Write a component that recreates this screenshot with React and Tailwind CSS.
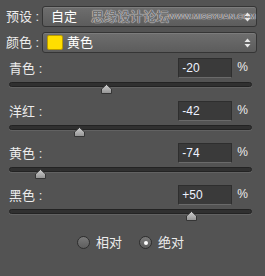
const font = { fontFamily: '"Liberation Sans", "Noto Sans CJK SC", sans-serif' };

const sliders = [
  { label: '青色', value: -20, mt: 'mt-[5px]' },
  { label: '洋红', value: -42, mt: 'mt-[14px]' },
  { label: '黄色', value: -74, mt: 'mt-[13px]' },
  { label: '黑色', value: 50, mt: 'mt-[13px]' },
];

function Arrows() {
  return (
    <svg width="7" height="10" viewBox="0 0 7 10" className="absolute right-[5px] top-1/2 -translate-y-1/2">
      <path d="M3.5 0.5 L6.5 4 L0.5 4 Z" fill="#e8e8e8" />
      <path d="M3.5 9.5 L6.5 6 L0.5 6 Z" fill="#e8e8e8" />
    </svg>
  );
}

function Dropdown({ children }) {
  return (
    <div className="relative ml-auto mr-[8px] h-[21px] w-[215px] shrink-0 rounded-[3px] border border-[#353535] bg-gradient-to-b from-[#6e6e6e] to-[#5c5c5c] shadow-[inset_0_1px_0_#7c7c7c] flex items-center">
      {children}
      <Arrows />
    </div>
  );
}

function Thumb({ value }) {
  const left = 121.5 + value * 1.215 - 5.5;
  return (
    <svg
      width="11"
      height="10"
      viewBox="0 0 11 10"
      className="absolute top-[2px]"
      style={{ left: `${left}px` }}
    >
      <defs>
        <linearGradient id="tg" x1="0" y1="0" x2="0" y2="1">
          <stop offset="0" stopColor="#d0d0d0" />
          <stop offset="1" stopColor="#929292" />
        </linearGradient>
      </defs>
      <path d="M5.5 0.5 L10.5 5 L10.5 9.5 L0.5 9.5 L0.5 5 Z" fill="url(#tg)" stroke="#353535" strokeWidth="1" />
    </svg>
  );
}

function Slider({ label, value, mt }) {
  const text = value > 0 ? `+${value}` : `${value}`;
  return (
    <div className={`${mt} pl-[9px]`}>
      <div className="flex h-[20px] items-center">
        <span className="whitespace-nowrap text-[13px] text-[#ececec] leading-none">
          {label} :
        </span>
        <div className="ml-auto h-[20px] w-[54px] border border-[#2e2e2e] border-b-[#6a6a6a] bg-[#3a3a3a] pl-[3px] flex items-center text-[12px] text-[#eef2ff]">
          {text}
        </div>
        <span className="ml-[5px] mr-[17px] self-start mt-[3px] text-[12px] text-[#ececec] leading-none">%</span>
      </div>
      <div className="relative mt-[4px] h-[5px] w-[243px]">
        <div className="h-[5px] w-[243px] rounded-full border border-[#232323] bg-[#303030] shadow-[0_1px_0_#626262]" />
        <Thumb value={value} />
      </div>
    </div>
  );
}

function Radio({ checked, label }) {
  return (
    <div className="flex items-center">
      <div className="h-[13px] w-[13px] rounded-full border border-[#2e2e2e] bg-gradient-to-b from-[#7a7a7a] to-[#5e5e5e] flex items-center justify-center">
        {checked && <div className="h-[4px] w-[4px] rounded-full bg-white" />}
      </div>
      <span className="ml-[6px] text-[13px] text-[#ececec] leading-none">{label}</span>
    </div>
  );
}

export default function App() {
  return (
    <div className="h-[276px] w-[265px] bg-[#535353] overflow-hidden" style={font}>
      <div className="flex items-center pt-[6px] pl-[6px]">
        <span className="whitespace-nowrap text-[13px] text-[#ececec] leading-none">预设 :</span>
        <Dropdown>
          <span className="ml-[8px] text-[13px] text-white leading-none">自定</span>
          <span className="absolute left-[48px] top-[3px] text-[13px] font-bold leading-none text-[#727272] [text-shadow:0_0_1px_#e0e0e0,0_0_1px_#e0e0e0]">
            思缘设计论坛
          </span>
          <span className="absolute left-[125px] top-[6px] text-[8px] font-bold leading-none text-[#6a6a6a] [text-shadow:0_0_1px_#f0f0f0,0_0_1px_#f0f0f0]">
            WWW.MISSYUAN.COM
          </span>
        </Dropdown>
      </div>
      <div className="mt-[5px] flex items-center pl-[6px]">
        <span className="whitespace-nowrap text-[13px] text-[#ececec] leading-none">颜色 :</span>
        <Dropdown>
          <div className="ml-[4px] h-[15px] w-[16px] rounded-[2px] border border-[#b89a00] bg-[#ffde00]" />
          <span className="ml-[4px] text-[13px] text-white leading-none">黄色</span>
        </Dropdown>
      </div>
      {sliders.map((s) => (
        <Slider key={s.label} {...s} />
      ))}
      <div className="mt-[22px] flex items-center gap-[17px] pl-[77px]">
        <Radio label="相对" />
        <Radio checked label="绝对" />
      </div>
    </div>
  );
}
